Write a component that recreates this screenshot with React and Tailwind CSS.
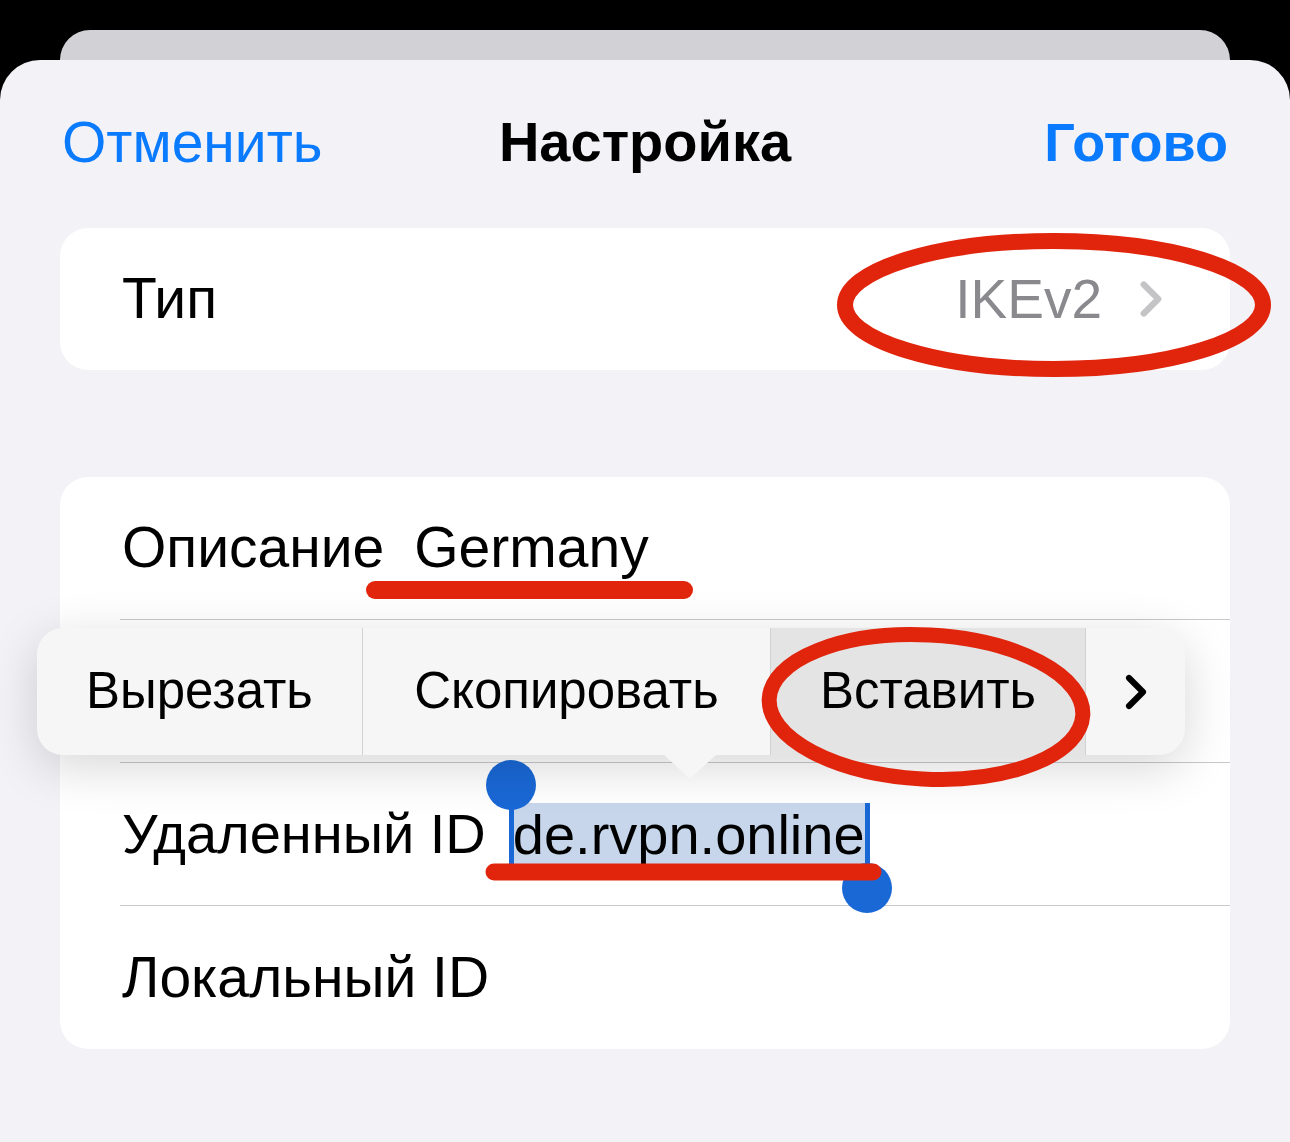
import { ChevronRight } from "lucide-react"

const FONT = { fontFamily: '"Liberation Sans", Arial, sans-serif' }

function Row({ children, last }) {
  return (
    <div className="pl-[60px] h-[143px]">
      <div
        className={
          "h-full flex items-center pl-[2px] " +
          (last ? "" : "border-b border-[#c8c8cc]")
        }
      >
        {children}
      </div>
    </div>
  )
}

function Selection() {
  return (
    <span className="relative inline-block ml-[27px] h-[63px] leading-[63px] bg-[#c7d6ea] pr-[1px] text-[56px]">
      de.rvpn.online
      <span className="absolute left-[-4px] top-[-17px] w-[5px] h-[80px] bg-[#1a68d6]" />
      <span className="absolute left-[-27px] top-[-43px] w-[50px] h-[50px] rounded-full bg-[#1a68d6]" />
      <span className="absolute right-[-4px] top-0 w-[5px] h-[68px] bg-[#1a68d6]" />
      <span className="absolute right-[-26px] top-[60px] w-[50px] h-[50px] rounded-full bg-[#1a68d6]" />
    </span>
  )
}

function ContextMenu() {
  const seg = "h-full flex items-center justify-center"
  return (
    <>
      <div className="absolute left-[37px] top-[628px] w-[1148px] h-[127px] rounded-[26px] bg-[#f6f6f6] shadow-[0_12px_50px_rgba(0,0,0,0.16)] flex overflow-hidden text-[51px] text-black">
        <div className={seg + " w-[325px]"}>Вырезать</div>
        <div className="w-px h-full bg-[#d2d2d2]" />
        <div className={seg + " w-[407px]"}>Скопировать</div>
        <div className="w-px h-full bg-[#d2d2d2]" />
        <div className={seg + " w-[314px] bg-[#e4e4e4]"}>Вставить</div>
        <div className="w-px h-full bg-[#d2d2d2]" />
        <div className={seg + " flex-1"}>
          <ChevronRight size={56} strokeWidth={2.6} />
        </div>
      </div>
      <div className="absolute left-[663px] top-[754px] w-0 h-0 border-l-[27px] border-r-[27px] border-t-[25px] border-l-transparent border-r-transparent border-t-[#f6f6f6]" />
    </>
  )
}

function Annotations() {
  const red = "#e1240c"
  return (
    <svg className="absolute inset-0 pointer-events-none" width="1290" height="1142">
      <ellipse cx="1054" cy="305" rx="209" ry="64" fill="none" stroke={red} strokeWidth="16" />
      <line x1="375" y1="590" x2="684" y2="590" stroke={red} strokeWidth="18" strokeLinecap="round" />
      <ellipse cx="926" cy="707" rx="157" ry="72" fill="none" stroke={red} strokeWidth="15" transform="rotate(3 926 707)" />
      <line x1="494" y1="872" x2="873" y2="872" stroke={red} strokeWidth="17" strokeLinecap="round" />
    </svg>
  )
}

export default function App() {
  return (
    <div className="relative w-[1290px] h-[1142px] bg-black overflow-hidden flex flex-col" style={FONT}>
      <div className="pt-[30px] px-[60px]">
        <div className="h-[30px] rounded-t-[32px] bg-[#d1d1d6]" />
      </div>
      <div className="flex-1 bg-[#f2f2f7] rounded-t-[40px]">
        <div className="grid grid-cols-[1fr_auto_1fr] items-center px-[62px] pt-[52px] h-[112px] text-[57px] leading-[60px]">
          <span className="text-[#0a7bfe]">Отменить</span>
          <span className="font-bold text-black text-[56px]">Настройка</span>
          <span className="font-bold text-[#0a7bfe] text-[54px] text-right">Готово</span>
        </div>
        <div className="mx-[60px] mt-[56px] h-[142px] bg-white rounded-[28px] flex items-center justify-between pl-[62px] pr-[50px] text-[57px]">
          <span className="text-black">Тип</span>
          <span className="flex items-center gap-[20px] text-[#8a8a8e] text-[55px]">
            IKEv2
            <ChevronRight size={58} strokeWidth={2.6} className="text-[#c4c4c7]" />
          </span>
        </div>
        <div className="mx-[60px] mt-[107px] bg-white rounded-[28px] text-[57px] text-black">
          <Row>
            <span>Описание</span>
            <span className="ml-[30px]">Germany</span>
          </Row>
          <Row>
            <span />
          </Row>
          <Row>
            <span className="text-[56px]">Удаленный ID</span>
            <Selection />
          </Row>
          <Row last>
            <span>Локальный ID</span>
          </Row>
        </div>
      </div>
      <ContextMenu />
      <Annotations />
    </div>
  )
}
